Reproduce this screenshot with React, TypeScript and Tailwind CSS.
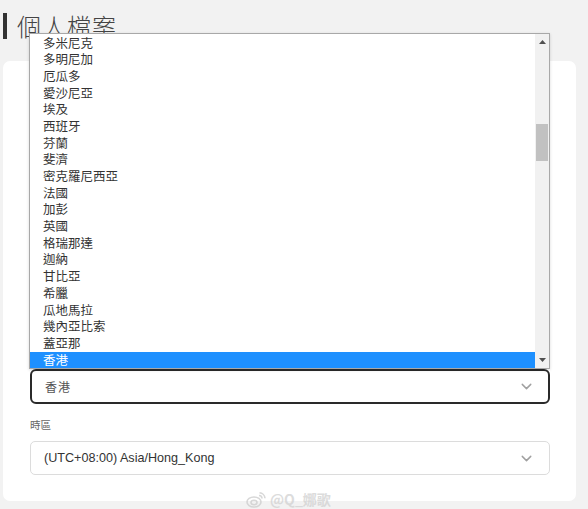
import React from "react";
import { ChevronDown } from "lucide-react";

const countries = [
  "多米尼克",
  "多明尼加",
  "厄瓜多",
  "愛沙尼亞",
  "埃及",
  "西班牙",
  "芬蘭",
  "斐濟",
  "密克羅尼西亞",
  "法國",
  "加彭",
  "英國",
  "格瑞那達",
  "迦納",
  "甘比亞",
  "希臘",
  "瓜地馬拉",
  "幾內亞比索",
  "蓋亞那",
  "香港",
];

const cjk = { fontFamily: '"Noto Sans CJK TC", "Noto Sans", sans-serif' };

export default function App() {
  return (
    <div
      className="relative w-[588px] h-[509px] overflow-hidden bg-[#f2f2f2]"
      style={{ fontFamily: '"Liberation Sans", "Noto Sans CJK TC", sans-serif' }}
    >
      {/* Header */}
      <div className="flex items-center pt-[13px] pl-[3px] gap-[10px]">
        <div className="w-[4px] h-[26px] bg-[#333]" />
        <h1
          className="text-[24px] leading-[26px] tracking-[1px] font-light text-[#444]"
          style={cjk}
        >
          個人檔案
        </h1>
      </div>

      {/* Card */}
      <div className="mt-[22px] ml-[3px] w-[573px] h-[440px] bg-white rounded-[7px] px-[27px] pt-[308px]">
        <div className="flex items-center justify-between h-[35px] w-[520px] border-2 border-[#2a2a2a] rounded-[6px] pl-[13px] pr-[13px]">
          <span className="text-[12px] text-[#555] tracking-[1px]" style={cjk}>
            香港
          </span>
          <ChevronDown size={17} strokeWidth={2} color="#a0a0a0" />
        </div>

        <div className="mt-[14px] text-[10.5px] leading-[14px] text-[#666]" style={cjk}>
          時區
        </div>

        <div className="mt-[9px] flex items-center justify-between h-[34px] w-[520px] border border-[#dcdcdc] rounded-[5px] pl-[13px] pr-[14px]">
          <span className="text-[12.6px] text-[#333]">(UTC+08:00) Asia/Hong_Kong</span>
          <ChevronDown size={17} strokeWidth={2} color="#a0a0a0" />
        </div>
      </div>

      {/* Open dropdown list */}
      <div className="absolute left-[29px] top-[33px] w-[521px] h-[336px] bg-white border border-[#a8a8a8] shadow-[0_1px_3px_rgba(0,0,0,0.15)] flex">
        <ul className="flex-1 pt-[0.5px]" style={cjk}>
          {countries.map((c) => {
            const sel = c === "香港";
            return (
              <li
                key={c}
                className={
                  sel
                    ? "h-[16.7px] leading-[16.7px] pl-[13px] text-[12.5px] bg-[#1e90ff] text-white"
                    : "h-[16.7px] leading-[16.7px] pl-[13px] text-[12.5px] text-[#333]"
                }
              >
                {c}
              </li>
            );
          })}
        </ul>
        <div className="w-[14px] h-full bg-[#f1f1f1] flex flex-col items-center">
          <div className="h-[16px] flex items-center justify-center">
            <svg width="7" height="4" viewBox="0 0 7 4">
              <polygon points="3.5,0 7,4 0,4" fill="#505050" />
            </svg>
          </div>
          <div className="mt-[74px] w-[12px] h-[37px] bg-[#c1c1c1]" />
          <div className="flex-1" />
          <div className="h-[16px] flex items-center justify-center">
            <svg width="7" height="4" viewBox="0 0 7 4">
              <polygon points="0,0 7,0 3.5,4" fill="#505050" />
            </svg>
          </div>
        </div>
      </div>

      {/* Watermark */}
      <div className="absolute left-[246px] top-[489px] flex items-center gap-[4px] text-[#d4d4d4] opacity-80">
        <svg width="20" height="16" viewBox="0 0 20 16" fill="none" stroke="#cfcfcf" strokeWidth="1.6">
          <ellipse cx="8" cy="10" rx="7" ry="5" />
          <ellipse cx="8" cy="10.5" rx="3" ry="2.2" />
          <path d="M13 3.5 a3 3 0 0 1 3 3" />
          <path d="M13.5 0.8 a6 6 0 0 1 5.5 5.5" />
        </svg>
        <span className="text-[14px] font-bold" style={cjk}>
          @Q_娜歌
        </span>
      </div>
    </div>
  );
}
